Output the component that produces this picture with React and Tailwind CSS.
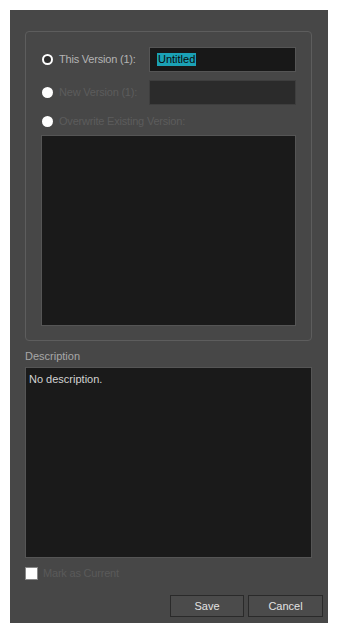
export default function App() {
  const font = { fontFamily: '"Liberation Sans", Arial, sans-serif' };
  return (
    <div className="w-[338px] h-[633px] bg-white pt-[10px] pl-[10px]" style={font}>
      <div className="w-[318px] h-[613px] bg-[#474747] flex flex-col pl-[15px] pr-[16px] pt-[21px] text-[11px]">
        {/* group box */}
        <div className="h-[310px] border border-[#5d5d5d] rounded-[4px] px-[15px] pt-[15px] flex flex-col">
          {/* row 1 */}
          <div className="flex items-center h-[25px]">
            <div className="ml-[1px] w-[11px] h-[11px] rounded-full border-2 border-white bg-[#2e2e2e]" />
            <span className="ml-[6px] text-[#b4b4b4] tracking-[-0.2px]">This Version (1):</span>
            <div className="ml-auto w-[147px] h-[25px] bg-[#181818] border border-[#555] flex items-center pl-[7px]">
              <span className="bg-[#1ba1b5] text-[#0a0a0a] leading-[13px] px-[1px]">Untitled</span>
            </div>
          </div>
          {/* row 2 */}
          <div className="flex items-center h-[25px] mt-[8px]">
            <div className="ml-[1px] w-[11px] h-[11px] rounded-full bg-white" />
            <span className="ml-[6px] text-[#5c5c5c] tracking-[-0.2px]">New Version (1):</span>
            <div className="ml-auto w-[147px] h-[25px] bg-[#2b2b2b] border border-[#3e3e3e]" />
          </div>
          {/* row 3 */}
          <div className="flex items-center h-[16px] mt-[8px]">
            <div className="ml-[1px] w-[11px] h-[11px] rounded-full bg-white" />
            <span className="ml-[6px] text-[#5c5c5c] tracking-[-0.2px]">Overwrite Existing Version:</span>
          </div>
          <div className="mt-[6px] h-[191px] bg-[#1a1a1a] border border-[#555]" />
        </div>
        {/* description */}
        <div className="mt-[8px] h-[14px] text-[#a8a8a8] leading-[14px]">Description</div>
        <div className="mt-[4px] h-[191px] bg-[#1a1a1a] border border-[#555] px-[3px] pt-[4px] text-[#d2d2d2] leading-[14px]">
          No description.
        </div>
        {/* checkbox */}
        <div className="flex items-center mt-[9px] h-[13px]">
          <div className="w-[13px] h-[13px] bg-white border border-[#888]" />
          <span className="ml-[5px] text-[#5a5a5a] tracking-[-0.2px]">Mark as Current</span>
        </div>
        {/* buttons */}
        <div className="flex justify-end gap-[4px] mt-[15px] -mr-[11px]">
          <button className="w-[74px] h-[22px] bg-[#4b4b4b] border border-[#2a2a2a] text-[#e2e2e2] text-[11px]">Save</button>
          <button className="w-[75px] h-[22px] bg-[#4b4b4b] border border-[#2a2a2a] text-[#e2e2e2] text-[11px]">Cancel</button>
        </div>
      </div>
    </div>
  );
}
